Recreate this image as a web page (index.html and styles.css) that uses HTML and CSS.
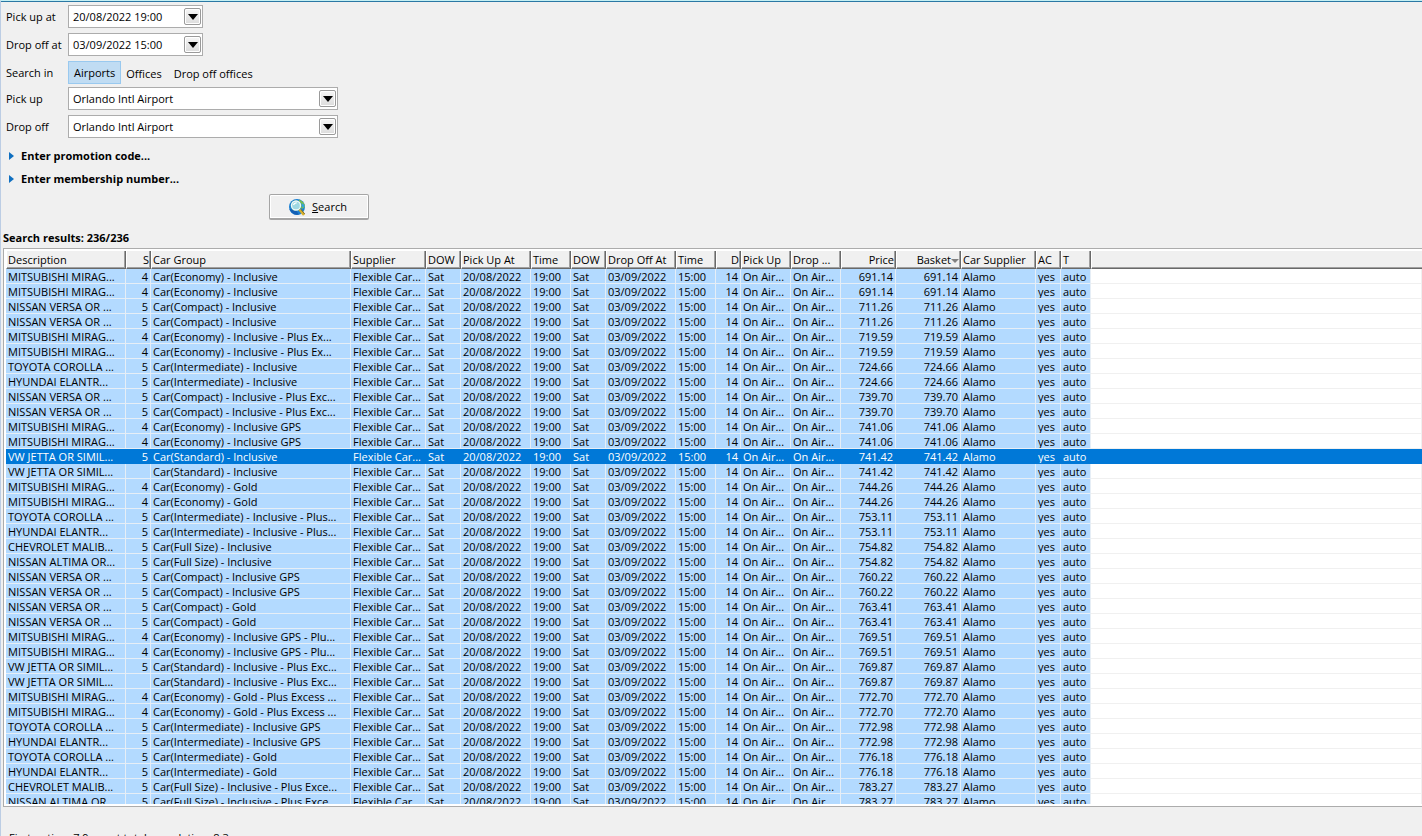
FILE: index.html
```html
<!DOCTYPE html>
<html lang="en">
<head>
    <meta charset="UTF-8">
    <meta name="viewport" content="width=device-width, initial-scale=1.0">
    <title>Car search</title>
    <link rel="stylesheet" href="styles.css">
</head>
<body>
    <form class="search-form" id="searchForm">
        <div class="field">
            <label for="pickUpAt">Pick up at</label>
            <div class="combo combo-date">
                <input type="text" id="pickUpAt" value="20/08/2022 19:00">
                <button type="button" class="arrow" aria-label="Choose pick up date"></button>
            </div>
        </div>
        <div class="field">
            <label for="dropOffAt">Drop off at</label>
            <div class="combo combo-date">
                <input type="text" id="dropOffAt" value="03/09/2022 15:00">
                <button type="button" class="arrow" aria-label="Choose drop off date"></button>
            </div>
        </div>
        <div class="field field-tabs">
            <span>Search in</span>
            <div class="tabs">
                <button type="button" class="tab active">Airports</button>
                <button type="button" class="tab">Offices</button>
                <button type="button" class="tab">Drop off offices</button>
            </div>
        </div>
        <div class="field">
            <label for="pickUp">Pick up</label>
            <div class="combo combo-place">
                <select id="pickUp"><option>Orlando Intl Airport</option></select>
                <span class="arrow"></span>
            </div>
        </div>
        <div class="field">
            <label for="dropOff">Drop off</label>
            <div class="combo combo-place">
                <select id="dropOff"><option>Orlando Intl Airport</option></select>
                <span class="arrow"></span>
            </div>
        </div>
        <div class="extras">
            <details>
                <summary>Enter promotion code...</summary>
                <input type="text" aria-label="Promotion code">
            </details>
            <details>
                <summary>Enter membership number...</summary>
                <input type="text" aria-label="Membership number">
            </details>
        </div>
        <div class="actions">
            <button type="submit" class="btn-search">
                <svg width="18" height="18" viewBox="0 0 18 18" aria-hidden="true">
                    <circle cx="9" cy="9" r="8" fill="#1b80d4"/>
                    <path d="M11 1.500C15 3 17 6 17 9L14 11 11 6Z" fill="#7cc043"/>
                    <path d="M13.500 5L16.500 7 16 10 13.500 8.500Z" fill="#2fa3e0"/>
                    <path d="M1.500 11C3 15 7 17.500 11 16.700L8 12Z" fill="#1560b4"/>
                    <circle cx="8" cy="7.500" r="5.500" fill="#3f93a8"/>
                    <circle cx="8" cy="7.500" r="4.500" fill="#9fd8e2" stroke="#eef8f8" stroke-width="1.300"/>
                    <path d="M5.500 7C6 5.200 7.200 4.700 8.700 4.900" fill="none" stroke="#fff" stroke-width="1.300"/>
                    <path d="M11.500 11.500L16 17" stroke="#d8b02a" stroke-width="2.600"/>
                    <path d="M13 11.500L16.800 16" stroke="#6f5a14" stroke-width=".8"/>
                </svg>
                <span><u>S</u>earch</span>
            </button>
        </div>
    </form>

    <h2 class="results-title">Search results: 236/236</h2>
    <div class="results">
        <div class="results-view">
            <table id="resultsTable">
                <colgroup>
                    <col class="col-desc">
                    <col class="col-xs">
                    <col class="col-group">
                    <col class="col-supplier">
                    <col class="col-dow">
                    <col class="col-date">
                    <col class="col-time">
                    <col class="col-dow">
                    <col class="col-date">
                    <col class="col-time">
                    <col class="col-xs">
                    <col class="col-place">
                    <col class="col-place">
                    <col class="col-price">
                    <col class="col-basket">
                    <col class="col-supplier">
                    <col class="col-xs">
                    <col class="col-gear">
                    <col>
                </colgroup>
                <thead>
                    <tr>
                        <th>Description</th>
                        <th class="num">S</th>
                        <th>Car Group</th>
                        <th>Supplier</th>
                        <th>DOW</th>
                        <th>Pick Up At</th>
                        <th>Time</th>
                        <th>DOW</th>
                        <th>Drop Off At</th>
                        <th>Time</th>
                        <th class="num">D</th>
                        <th>Pick Up</th>
                        <th>Drop ...</th>
                        <th class="num">Price</th>
                        <th class="num sorted">Basket</th>
                        <th>Car Supplier</th>
                        <th>AC</th>
                        <th>T</th>
                        <th class="rest"></th>
                    </tr>
                </thead>
                <tbody>
                    <!-- Rows are added by script.js -->
                </tbody>
            </table>
        </div>
    </div>
    <footer class="status">First option: 7.9s, cost total completion: 8.3s</footer>

    <script src="script.js"></script>
</body>
</html>
```

FILE: script.js
```js
// description, seats, car group, price
const cars = [
    ['MITSUBISHI MIRAG...', 4, 'Car(Economy) - Inclusive', '691.14'],
    ['MITSUBISHI MIRAG...', 4, 'Car(Economy) - Inclusive', '691.14'],
    ['NISSAN VERSA OR ...', 5, 'Car(Compact) - Inclusive', '711.26'],
    ['NISSAN VERSA OR ...', 5, 'Car(Compact) - Inclusive', '711.26'],
    ['MITSUBISHI MIRAG...', 4, 'Car(Economy) - Inclusive - Plus Ex...', '719.59'],
    ['MITSUBISHI MIRAG...', 4, 'Car(Economy) - Inclusive - Plus Ex...', '719.59'],
    ['TOYOTA COROLLA ...', 5, 'Car(Intermediate) - Inclusive', '724.66'],
    ['HYUNDAI ELANTR...', 5, 'Car(Intermediate) - Inclusive', '724.66'],
    ['NISSAN VERSA OR ...', 5, 'Car(Compact) - Inclusive - Plus Exc...', '739.70'],
    ['NISSAN VERSA OR ...', 5, 'Car(Compact) - Inclusive - Plus Exc...', '739.70'],
    ['MITSUBISHI MIRAG...', 4, 'Car(Economy) - Inclusive GPS', '741.06'],
    ['MITSUBISHI MIRAG...', 4, 'Car(Economy) - Inclusive GPS', '741.06'],
    ['VW JETTA OR SIMIL...', 5, 'Car(Standard) - Inclusive', '741.42'],
    ['VW JETTA OR SIMIL...', '', 'Car(Standard) - Inclusive', '741.42'],
    ['MITSUBISHI MIRAG...', 4, 'Car(Economy) - Gold', '744.26'],
    ['MITSUBISHI MIRAG...', 4, 'Car(Economy) - Gold', '744.26'],
    ['TOYOTA COROLLA ...', 5, 'Car(Intermediate) - Inclusive - Plus...', '753.11'],
    ['HYUNDAI ELANTR...', 5, 'Car(Intermediate) - Inclusive - Plus...', '753.11'],
    ['CHEVROLET MALIB...', 5, 'Car(Full Size) - Inclusive', '754.82'],
    ['NISSAN ALTIMA OR...', 5, 'Car(Full Size) - Inclusive', '754.82'],
    ['NISSAN VERSA OR ...', 5, 'Car(Compact) - Inclusive GPS', '760.22'],
    ['NISSAN VERSA OR ...', 5, 'Car(Compact) - Inclusive GPS', '760.22'],
    ['NISSAN VERSA OR ...', 5, 'Car(Compact) - Gold', '763.41'],
    ['NISSAN VERSA OR ...', 5, 'Car(Compact) - Gold', '763.41'],
    ['MITSUBISHI MIRAG...', 4, 'Car(Economy) - Inclusive GPS - Plu...', '769.51'],
    ['MITSUBISHI MIRAG...', 4, 'Car(Economy) - Inclusive GPS - Plu...', '769.51'],
    ['VW JETTA OR SIMIL...', 5, 'Car(Standard) - Inclusive - Plus Exc...', '769.87'],
    ['VW JETTA OR SIMIL...', '', 'Car(Standard) - Inclusive - Plus Exc...', '769.87'],
    ['MITSUBISHI MIRAG...', 4, 'Car(Economy) - Gold - Plus Excess ...', '772.70'],
    ['MITSUBISHI MIRAG...', 4, 'Car(Economy) - Gold - Plus Excess ...', '772.70'],
    ['TOYOTA COROLLA ...', 5, 'Car(Intermediate) - Inclusive GPS', '772.98'],
    ['HYUNDAI ELANTR...', 5, 'Car(Intermediate) - Inclusive GPS', '772.98'],
    ['TOYOTA COROLLA ...', 5, 'Car(Intermediate) - Gold', '776.18'],
    ['HYUNDAI ELANTR...', 5, 'Car(Intermediate) - Gold', '776.18'],
    ['CHEVROLET MALIB...', 5, 'Car(Full Size) - Inclusive - Plus Exce...', '783.27'],
    ['NISSAN ALTIMA OR...', 5, 'Car(Full Size) - Inclusive - Plus Exce...', '783.27']
];

const tbody = document.querySelector('#resultsTable tbody');

// Function to mark one row as the selected one
function selectRow(row) {
    const current = tbody.querySelector('.selected');
    if (current) {
        current.classList.remove('selected');
    }
    row.classList.add('selected');
}

cars.forEach(([description, seats, group, price]) => {
    const row = tbody.insertRow();
    row.innerHTML = `
        <td>${description}</td>
        <td class="num">${seats}</td>
        <td>${group}</td>
        <td>Flexible Car...</td>
        <td>Sat</td>
        <td>20/08/2022</td>
        <td>19:00</td>
        <td>Sat</td>
        <td>03/09/2022</td>
        <td>15:00</td>
        <td class="num">14</td>
        <td>On Air...</td>
        <td>On Air...</td>
        <td class="num">${price}</td>
        <td class="num">${price}</td>
        <td>Alamo</td>
        <td>yes</td>
        <td>auto</td>
        <td class="rest"></td>
    `;
    row.addEventListener('click', () => selectRow(row));
});

selectRow(tbody.rows[12]);

document.getElementById('searchForm').addEventListener('submit', function(event) {
    event.preventDefault();
});
```

FILE: styles.css
```css
* {
    box-sizing: border-box;
}
body {
    margin: 0;
    height: 100vh;
    overflow: hidden;
    display: flex;
    flex-direction: column;
    font-family: 'Open Sans', 'Noto Sans', sans-serif;
    font-size: 11px;
    line-height: 15px;
    color: #000;
    background: #f0f0f0;
    border-top: 1px solid #c4f0f4;
    border-left: 1px solid #bccde4;
}
input, select, button {
    font: inherit;
    color: inherit;
}
.search-form {
    padding: 3px 5px 0;
    border-top: 1px solid #2b78a4;
}
.field {
    display: grid;
    grid-template-columns: 62px 1fr;
    align-items: center;
    margin-bottom: 5px;
}
.field-tabs {
    margin-bottom: 3px;
}
.combo {
    display: grid;
    align-items: center;
    height: 23px;
    background: #fff;
    border: 1px solid #acacac;
}
.combo-date {
    width: 135px;
}
.combo-place {
    width: 270px;
}
.combo input, .combo select {
    grid-area: 1 / 1;
    width: 100%;
    height: 21px;
    padding: 0 24px 0 4px;
    border: none;
    outline: none;
    background: transparent;
    appearance: none;
}
.arrow {
    grid-area: 1 / 1;
    justify-self: end;
    display: flex;
    align-items: center;
    justify-content: center;
    width: 17px;
    height: 17px;
    margin-right: 1px;
    padding: 0;
    border: 1px solid #9a9a9a;
    border-radius: 2px;
    background: linear-gradient(#f6f6f6, #dcdcdc);
    box-shadow: inset 0 0 0 1px #fff;
}
span.arrow {
    pointer-events: none;
}
.arrow::before {
    content: "";
    border: 5px solid transparent;
    border-top: 6px solid #000;
    border-bottom: none;
}
.tabs {
    display: flex;
}
.tab {
    height: 23px;
    padding: 1px 7px 0 5px;
    border: none;
    background: none;
}
.tab.active {
    padding: 0 5px;
    border: 1px solid #99c9ef;
    background: #c0dcf3;
}
.extras {
    padding-top: 1px;
}
summary {
    display: flex;
    align-items: center;
    height: 23px;
    font-weight: bold;
    cursor: pointer;
}
summary::before {
    content: "";
    margin: 0 7px 0 3px;
    border: 4px solid transparent;
    border-left: 5px solid #0f6fc0;
    border-right: none;
}
.actions {
    display: flex;
    justify-content: flex-end;
    width: 363px;
    padding-top: 4px;
}
.btn-search {
    display: flex;
    align-items: center;
    justify-content: center;
    gap: 6px;
    width: 100px;
    height: 26px;
    padding: 0 3px 0 0;
    border: 1px solid #a5a5a5;
    border-bottom: 2px solid #a5a5a5;
    border-radius: 2px;
    background: #f0f0f0;
    box-shadow: inset 0 0 0 1px #fff;
}
.results-title {
    margin: 11px 2px 3px;
    font-size: 11px;
    line-height: 14px;
}
.results {
    display: flex;
    flex: 1;
    min-height: 0;
    margin-left: 2px;
    padding: 2px 0 2px 2px;
    background: #fff;
    border: 1px solid #acacac;
    border-right: none;
}
.results-view {
    flex: 1;
    overflow: hidden;
}
table {
    width: 100%;
    min-width: 1120px;
    table-layout: fixed;
    border-collapse: separate;
    border-spacing: 0;
}
.col-xs {
    width: 25px;
}
.col-gear {
    width: 30px;
}
.col-dow {
    width: 35px;
}
.col-time {
    width: 40px;
}
.col-place {
    width: 50px;
}
.col-price {
    width: 55px;
}
.col-basket {
    width: 65px;
}
.col-date {
    width: 70px;
}
.col-supplier {
    width: 75px;
}
.col-desc {
    width: 120px;
}
.col-group {
    width: 200px;
}
th, td {
    padding: 0 0 0 2px;
    text-align: left;
    font-weight: normal;
    white-space: nowrap;
    overflow: hidden;
}
th {
    height: 18px;
    padding-left: 1px;
    background: #f0f0f0;
    border-left: 1px solid #fff;
    border-right: 1px solid #696969;
    border-bottom: 1px solid #696969;
    box-shadow: inset -1px -1px #a0a0a0;
}
td {
    height: 15px;
    padding-top: 1px;
    line-height: 13px;
    background: #b3daff;
    border-right: 1px solid #e6eef6;
    border-bottom: 1px solid #e6eef6;
}
th.num, td.num {
    text-align: right;
}
th.num {
    padding-right: 1px;
}
td.num {
    padding-right: 2px;
}
th.sorted::after {
    content: "";
    display: inline-block;
    vertical-align: middle;
    border: 4px solid transparent;
    border-top: 4px solid #808080;
    border-bottom: none;
}
th.rest {
    border-right: none;
    box-shadow: inset 0 -1px #a0a0a0;
}
td.rest {
    background: #fff;
    border-color: #f0f0f0;
}
tr.selected td {
    color: #fff;
    background: #0078d7;
    border-color: #0078d7;
}
.status {
    height: 29px;
    padding: 23px 8px 0;
    overflow: hidden;
    white-space: nowrap;
}
```
